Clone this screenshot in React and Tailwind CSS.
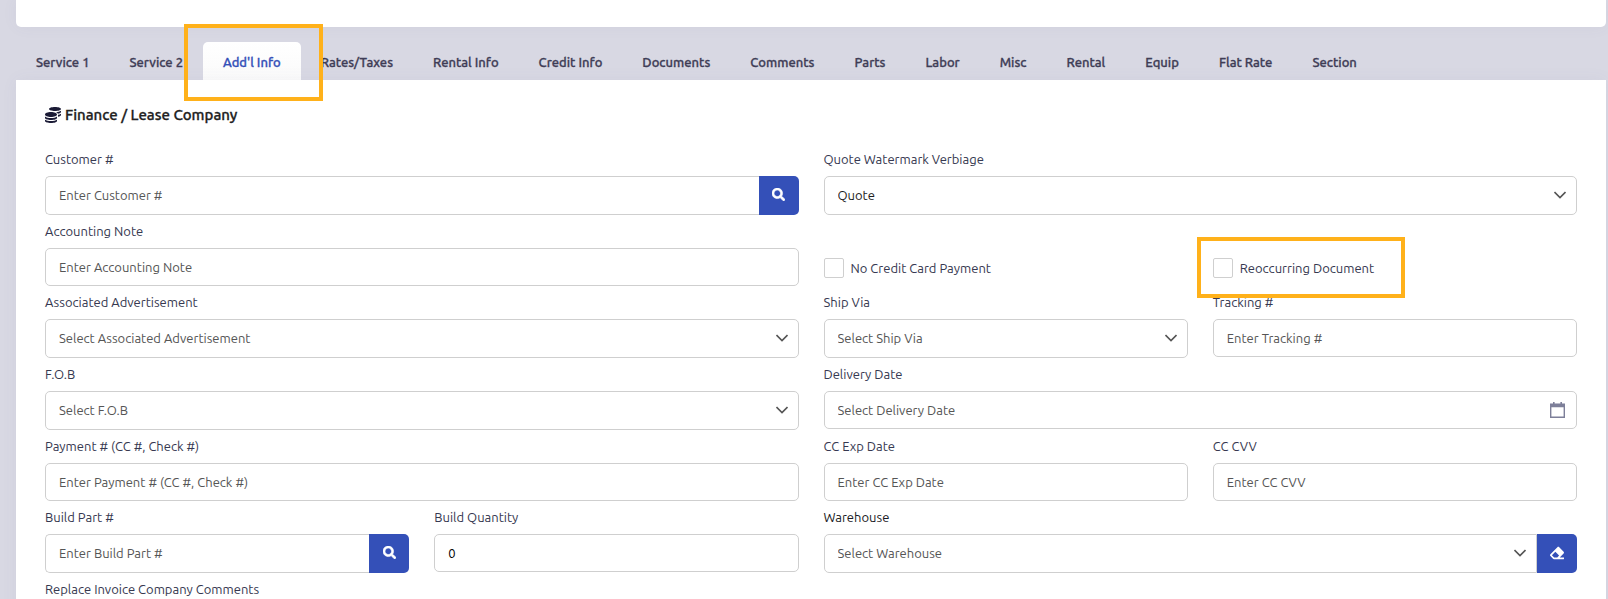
// src/App.jsx
import React, { useState } from "react";
import { FaCoins, FaEraser, FaSearch } from "react-icons/fa";

const tabs = [
  "Service 1",
  "Service 2",
  "Add'l Info",
  "Rates/Taxes",
  "Rental Info",
  "Credit Info",
  "Documents",
  "Comments",
  "Parts",
  "Labor",
  "Misc",
  "Rental",
  "Equip",
  "Flat Rate",
  "Section",
];

const control =
  "w-full min-w-0 border border-[#cfcfcf] bg-white px-[13px] text-[13px] placeholder:text-[#555] placeholder:opacity-100 focus:border-[#3450b8] focus:outline-none";

function Field({ id, label, wide = false, dark = false, children }) {
  return (
    <div className={wide ? "col-span-2" : ""}>
      <label
        htmlFor={id}
        className={`mb-[7px] block text-[13px] leading-5 ${dark ? "text-[#1a1a24]" : "text-[#363850]"}`}
      >
        {label}
      </label>
      {children}
    </div>
  );
}

function TextInput({ id, ...props }) {
  return <input id={id} type="text" className={`${control} h-[38px] rounded-[5px] text-black`} {...props} />;
}

function SelectInput({ id, option, filled = false, grouped = false }) {
  return (
    <div className="relative w-full">
      <select
        id={id}
        className={`${control} block h-[39px] appearance-none pr-9 ${grouped ? "rounded-l-[5px]" : "rounded-[5px]"} ${
          filled ? "text-[#1c1c1c]" : "text-[#555]"
        }`}
      >
        <option>{option}</option>
      </select>
      <svg
        className="pointer-events-none absolute right-[11px] top-3.5 h-2.5 w-3 text-[#555]"
        viewBox="0 0 12 10"
        fill="none"
        stroke="currentColor"
        strokeWidth="1.6"
      >
        <path d="M0.5 2 6 7.5 11.5 2" />
      </svg>
    </div>
  );
}

function SideButton({ label, children }) {
  return (
    <button
      type="button"
      aria-label={label}
      className="flex h-[39px] w-10 shrink-0 items-center justify-center rounded-r-[5px] bg-[#3450b8] pb-0.5 text-white hover:bg-[#2b449f]"
    >
      {children}
    </button>
  );
}

function SearchInput({ id, placeholder }) {
  return (
    <div className="flex">
      <input
        id={id}
        type="text"
        placeholder={placeholder}
        className={`${control} h-[39px] rounded-l-[5px] border-r-0 pb-0.5`}
      />
      <SideButton label="Search">
        <FaSearch className="h-[13px] w-[13px]" strokeWidth={24} />
      </SideButton>
    </div>
  );
}

function DateInput({ id, placeholder }) {
  return (
    <div className="relative">
      <TextInput id={id} placeholder={placeholder} />
      <button type="button" aria-label="Open calendar" className="absolute right-3 top-[11px] text-[#7d7f99]">
        <svg className="h-4 w-[15px]" viewBox="0 0 15 16" fill="currentColor">
          <path d="M3 0h1.6v1.5h5.8V0H12v1.5h3V16H0V1.5h3zM1.4 5.2v9.3h12.2V5.2z" fillRule="evenodd" />
        </svg>
      </button>
    </div>
  );
}

function CheckInput({ id, label }) {
  return (
    <div className="flex items-center gap-[7px] pt-[37px]">
      <input
        id={id}
        type="checkbox"
        className="h-5 w-5 shrink-0 appearance-none rounded-[2px] border border-[#cfcfcf] bg-white checked:bg-[#3450b8]"
      />
      <label htmlFor={id} className="text-[13px] leading-5 text-[#363850]">
        {label}
      </label>
    </div>
  );
}

export default function App() {
  const [active, setActive] = useState("Add'l Info");

  return (
    <div className="relative flex h-screen flex-col overflow-hidden bg-[#d8d8e3] pl-4 pr-0.5 font-['Ubuntu','Noto_Sans',sans-serif]">
      <div className="h-[27px] shrink-0 rounded-b-[5px] bg-white shadow-[0_0_16px_rgba(90,90,140,0.05)]" />

      <nav className="mt-[15px] flex h-[38px] shrink-0">
        {tabs.map((tab) => (
          <button
            key={tab}
            type="button"
            onClick={() => setActive(tab)}
            className={`shrink-0 rounded-t-[5px] px-5 pt-1 text-[13px] font-medium [-webkit-text-stroke:0.3px] ${
              tab === active ? "bg-linear-to-b from-white to-[#fafafa] text-[#3450b8]" : "text-[#3f3d56]"
            }`}
          >
            {tab}
          </button>
        ))}
      </nav>

      <main className="flex-1 bg-white px-[29px] pt-6 shadow-[0_0_16px_rgba(90,90,140,0.05)]">
        <h2 className="flex items-center gap-1 text-[15px] font-medium leading-[22px] text-[#212121] [-webkit-text-stroke:0.3px]">
          <FaCoins className="h-4 w-4 text-[#1a1a35]" />
          Finance / Lease Company
        </h2>

        <form className="mt-[23px] grid grid-cols-4 items-start gap-x-[25px] gap-y-1.5">
          <Field id="customer" label="Customer #" wide>
            <SearchInput id="customer" placeholder="Enter Customer #" />
          </Field>
          <Field id="watermark" label="Quote Watermark Verbiage" wide>
            <SelectInput id="watermark" option="Quote" filled />
          </Field>

          <Field id="note" label="Accounting Note" wide>
            <TextInput id="note" placeholder="Enter Accounting Note" />
          </Field>
          <CheckInput id="no-credit-card" label="No Credit Card Payment" />
          <CheckInput id="reoccurring" label="Reoccurring Document" />

          <Field id="advertisement" label="Associated Advertisement" wide>
            <SelectInput id="advertisement" option="Select Associated Advertisement" />
          </Field>
          <Field id="ship-via" label="Ship Via">
            <SelectInput id="ship-via" option="Select Ship Via" />
          </Field>
          <Field id="tracking" label="Tracking #">
            <TextInput id="tracking" placeholder="Enter Tracking #" />
          </Field>

          <Field id="fob" label="F.O.B" wide>
            <SelectInput id="fob" option="Select F.O.B" />
          </Field>
          <Field id="delivery-date" label="Delivery Date" wide>
            <DateInput id="delivery-date" placeholder="Select Delivery Date" />
          </Field>

          <Field id="payment" label="Payment # (CC #, Check #)" wide>
            <TextInput id="payment" placeholder="Enter Payment # (CC #, Check #)" />
          </Field>
          <Field id="cc-exp" label="CC Exp Date">
            <TextInput id="cc-exp" placeholder="Enter CC Exp Date" />
          </Field>
          <Field id="cc-cvv" label="CC CVV">
            <TextInput id="cc-cvv" placeholder="Enter CC CVV" />
          </Field>

          <Field id="build-part" label="Build Part #">
            <SearchInput id="build-part" placeholder="Enter Build Part #" />
          </Field>
          <Field id="build-quantity" label="Build Quantity">
            <TextInput id="build-quantity" defaultValue="0" />
          </Field>
          <Field id="warehouse" label="Warehouse" wide dark>
            <div className="flex">
              <SelectInput id="warehouse" option="Select Warehouse" grouped />
              <SideButton label="Clear warehouse">
                <FaEraser className="h-3.5 w-3.5" />
              </SideButton>
            </div>
          </Field>

          <Field id="comments" label="Replace Invoice Company Comments" wide>
            <textarea id="comments" rows={3} className={`${control} rounded-[5px] py-2`} />
          </Field>
        </form>
      </main>

      {/* callouts */}
      <div className="pointer-events-none absolute left-[184px] top-6 h-[77px] w-[139px] border-4 border-[#ffb11a]" />
      <div className="pointer-events-none absolute left-[1197px] top-[237px] h-[61px] w-52 border-4 border-[#ffb11a]" />
    </div>
  );
}
